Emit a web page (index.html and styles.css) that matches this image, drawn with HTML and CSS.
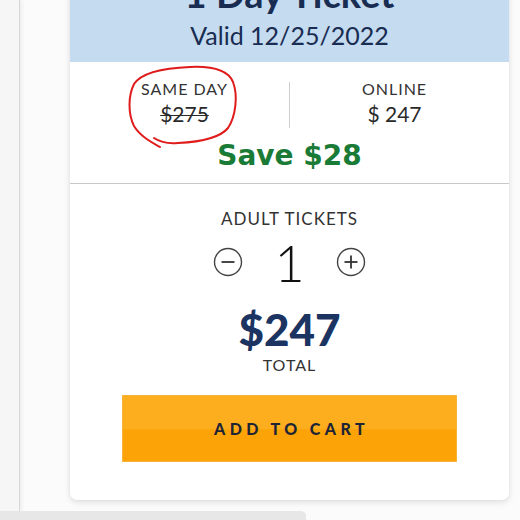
FILE: index.html
```html
<!DOCTYPE html>
<html>
<head>
<meta charset="utf-8">
<link rel="stylesheet" href="styles.css">
</head>
<body>
<div class="page">
  <div class="top">
    <div class="rail"></div>
    <div class="main">
      <div class="card">
        <div class="head">
          <div class="title">1 Day Ticket</div>
          <div class="valid">Valid 12/25/2022</div>
        </div>
        <div class="prices">
          <div class="cols">
            <div class="col">
              <div class="label">SAME DAY</div>
              <div class="amt strike">$275</div>
            </div>
            <div class="sep"></div>
            <div class="col">
              <div class="label">ONLINE</div>
              <div class="amt">$ 247</div>
            </div>
          </div>
          <div class="save">Save $28</div>
          <svg class="mark" viewBox="125 64 115 90" width="115" height="90">
            <path d="M 160 147 C 151 142, 140 136, 134 126 C 128 114, 128 96, 134 84 C 142 72, 165 68, 190 67 C 212 66, 228 70, 233 82 C 238 95, 236 116, 228 128 C 219 139, 198 142, 178 143 C 168 144, 160 142, 154 138" fill="none" stroke="#e01b1b" stroke-width="2" stroke-linecap="round" stroke-linejoin="round"/>
          </svg>
        </div>
        <div class="order">
          <div class="label qty-label">ADULT TICKETS</div>
          <div class="counter">
            <svg class="btn" viewBox="0 0 30 30" width="30" height="30"><circle cx="15" cy="15" r="13.5" fill="none" stroke="#444" stroke-width="1.4"/><line x1="8.5" y1="15" x2="21.5" y2="15" stroke="#333" stroke-width="1.8"/></svg>
            <div class="qty">1</div>
            <svg class="btn" viewBox="0 0 30 30" width="30" height="30"><circle cx="15" cy="15" r="13.5" fill="none" stroke="#444" stroke-width="1.4"/><line x1="8.5" y1="15" x2="21.5" y2="15" stroke="#333" stroke-width="1.8"/><line x1="15" y1="8.5" x2="15" y2="21.5" stroke="#333" stroke-width="1.8"/></svg>
          </div>
          <div class="total">$247</div>
          <div class="label total-label">TOTAL</div>
          <button class="cart">ADD TO CART</button>
        </div>
      </div>
    </div>
  </div>
  <div class="bar"></div>
</div>
</body>
</html>
```
FILE: styles.css
```css
html, body {
  margin: 0;
  padding: 0;
}
body {
  width: 520px;
  height: 520px;
  overflow: hidden;
  background: #fbfbfb;
  font-family: "Lato", "Open Sans", sans-serif;
  color: #222;
}
.page {
  display: flex;
  flex-direction: column;
  height: 520px;
}
.top {
  display: flex;
  height: 511px;
}
.rail {
  width: 19px;
  flex: none;
  background: #f6f6f6;
  border-right: 1px solid #d6d6d6;
  box-shadow: 2px 0 4px rgba(0,0,0,0.06);
}
.main {
  flex: 1;
  padding-left: 50px;
}
.card {
  width: 439px;
  margin-top: -40px;
  background: #fff;
  border-radius: 0 0 7px 7px;
  box-shadow: 0 2px 6px rgba(0,0,0,0.12), 0 0 2px rgba(0,0,0,0.05);
}
.head {
  background: #c5dbef;
  text-align: center;
  color: #192c52;
  height: 102px;
  box-sizing: border-box;
  padding-top: 11px;
}
.title {
  font-size: 38px;
  font-weight: 700;
  line-height: 44px;
}
.valid {
  font-size: 25px;
  line-height: 34px;
  margin-top: 3px;
}
.prices {
  position: relative;
  border-bottom: 1px solid #c8c8c8;
  padding: 16px 10px 0;
  height: 122px;
  box-sizing: border-box;
  text-align: center;
}
.cols {
  display: flex;
  align-items: stretch;
}
.col {
  flex: 1;
}
.sep {
  width: 1px;
  background: #cfcfcf;
  margin-top: 4px;
  height: 46px;
}
.label {
  font-size: 16px;
  letter-spacing: 1px;
  color: #333;
  line-height: 22px;
}
.amt {
  font-size: 21px;
  line-height: 28px;
  color: #2a2a2a;
}
.strike {
  text-decoration: line-through;
  text-decoration-thickness: 1px;
}
.save {
  font-family: "DejaVu Sans", sans-serif;
  font-size: 28px;
  font-weight: 700;
  color: #1a7b36;
  line-height: 34px;
  margin-top: 11px;
}
.mark {
  position: absolute;
  left: 55px;
  top: 2px;
}
.order {
  display: flex;
  flex-direction: column;
  align-items: center;
  padding: 24px 52px 38px;
}
.qty-label {
  font-size: 17px;
}
.counter {
  display: flex;
  align-items: center;
  gap: 31px;
  height: 46px;
  margin-top: 9px;
}
.qty {
  font-size: 52px;
  font-weight: 300;
  line-height: 46px;
  color: #111;
}
.total {
  font-size: 44px;
  font-weight: 900;
  color: #1b3461;
  line-height: 48px;
  margin-top: 20px;
}
.total-label {
  margin-top: 1px;
}
.cart {
  margin-top: 19px;
  width: 335px;
  height: 67px;
  border: 1px solid #f7b43a;
  background: linear-gradient(#fdae1e 0%, #fdae1e 50%, #fca307 52%, #fca307 100%);
  color: #1d2535;
  font-family: "Lato", sans-serif;
  font-weight: 900;
  font-size: 16px;
  letter-spacing: 4.4px;
  padding: 0 0 0 4px;
}
.bar {
  width: 306px;
  height: 9px;
  background: #e7e7e7;
  border-radius: 0 5px 0 0;
}
```
